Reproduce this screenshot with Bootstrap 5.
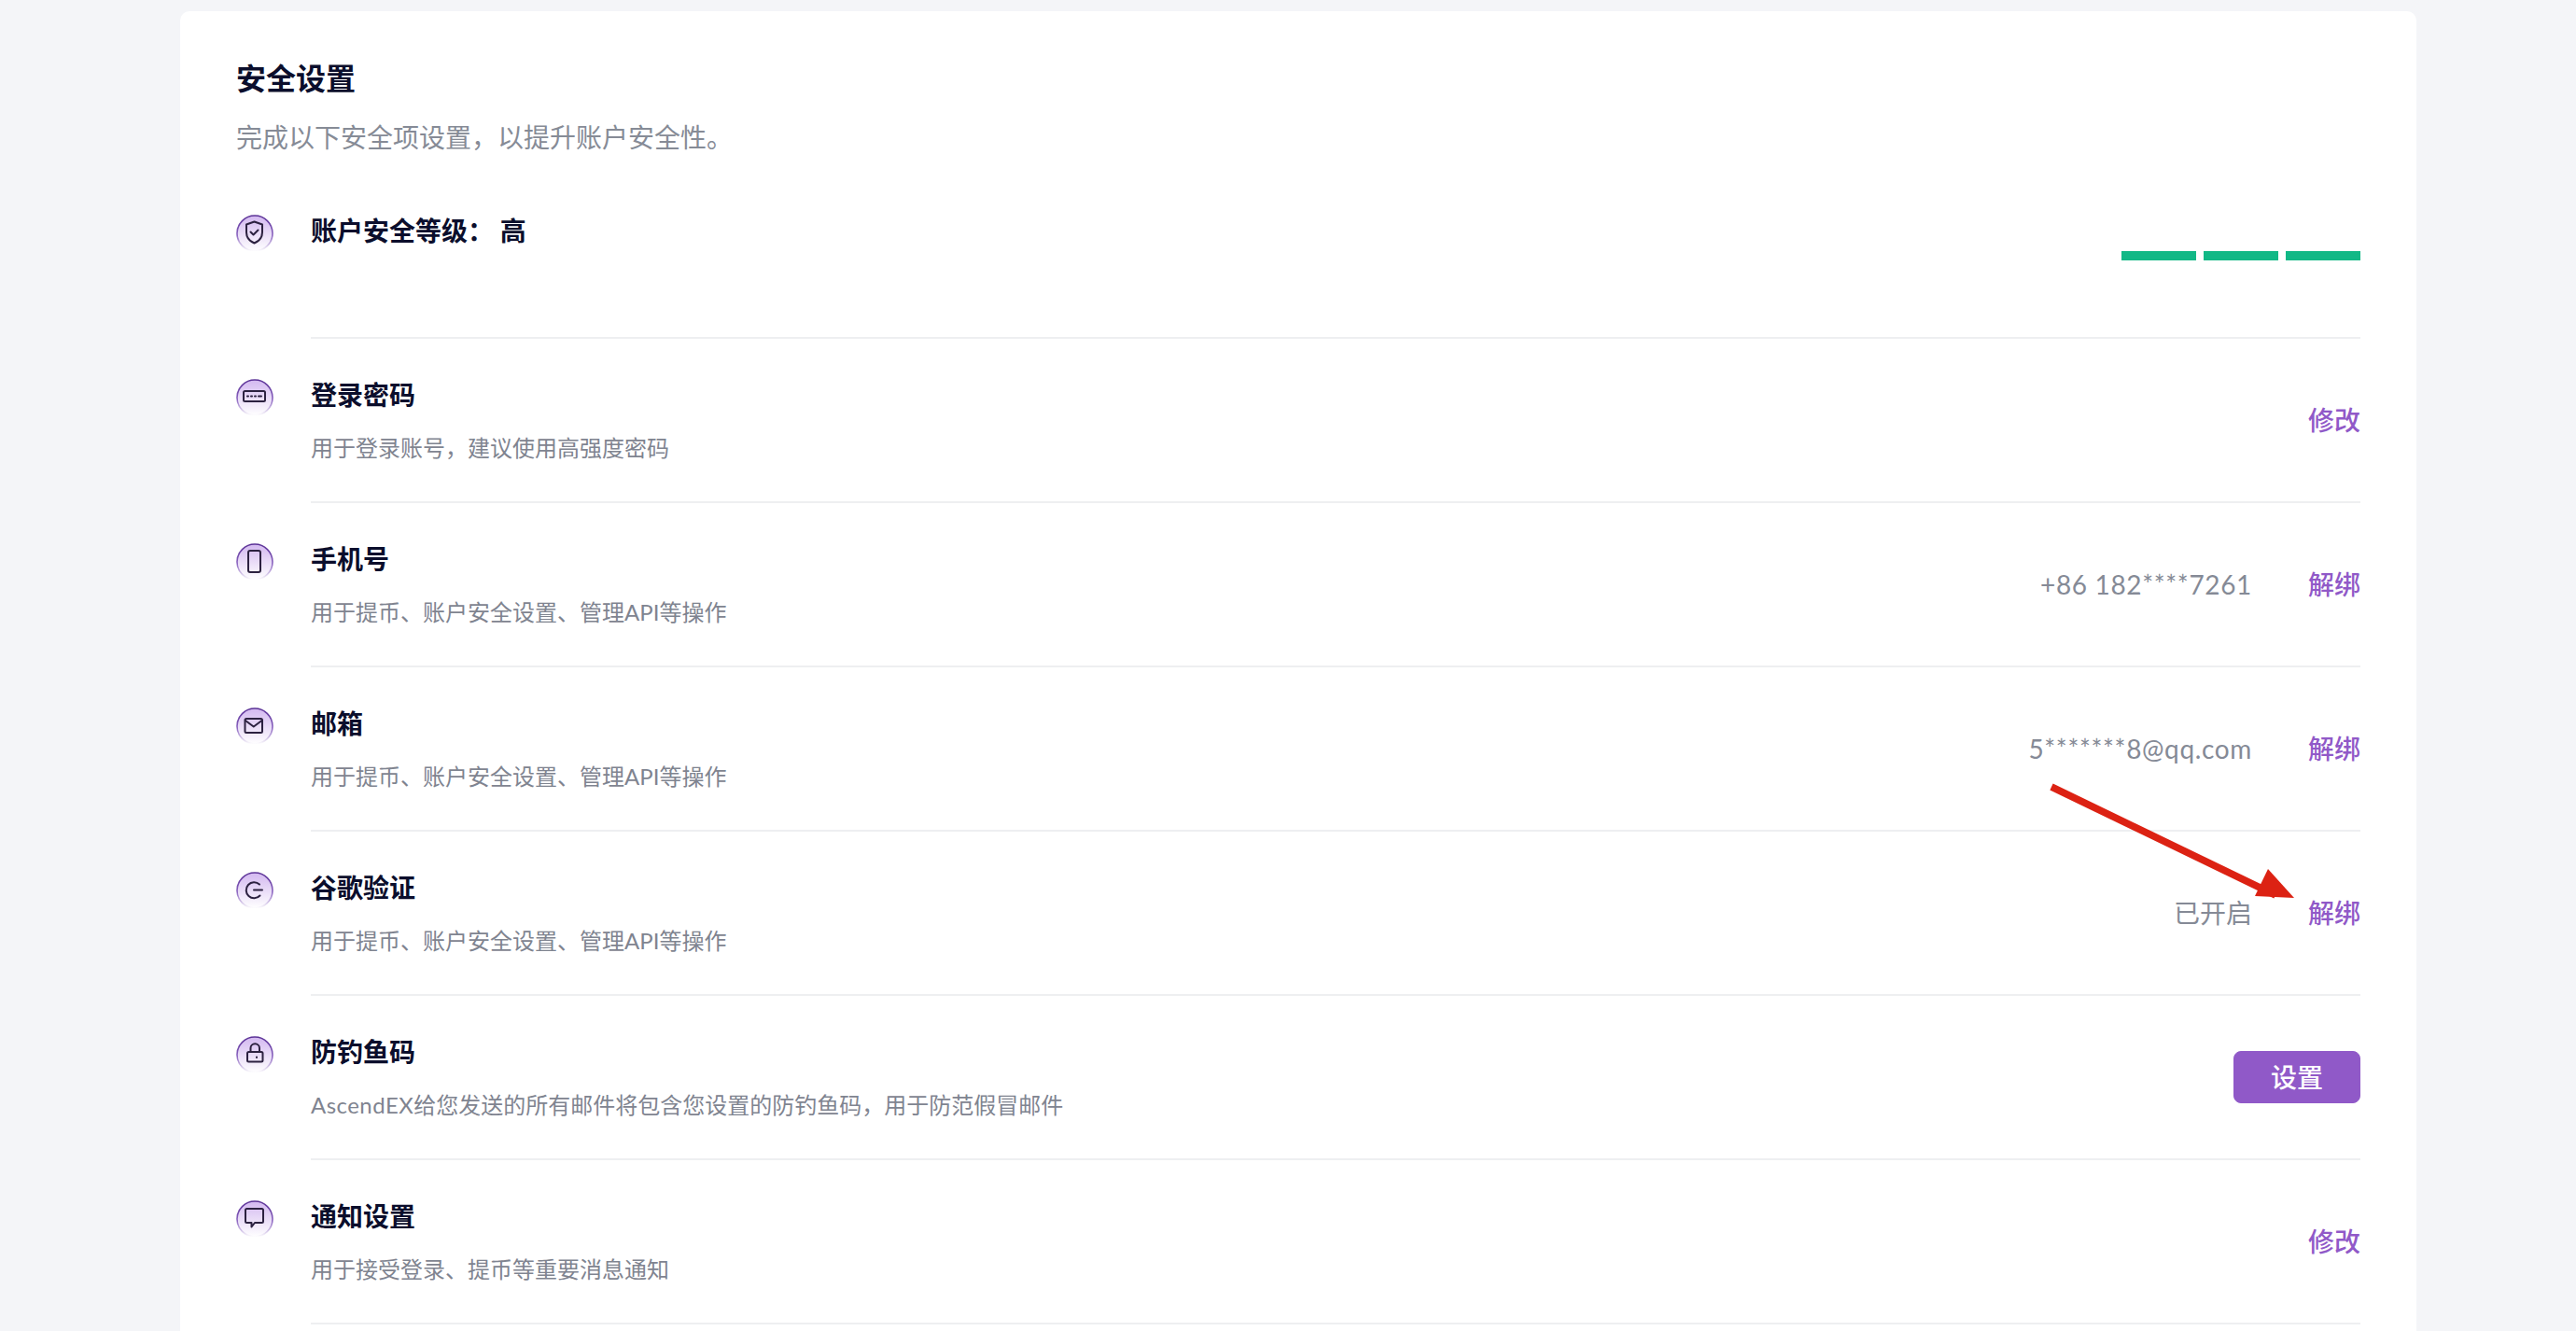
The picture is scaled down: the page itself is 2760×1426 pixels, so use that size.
<!DOCTYPE html>
<html lang="zh">
<head>
<meta charset="utf-8">
<title>安全设置</title>
<link href="https://cdn.jsdelivr.net/npm/bootstrap@5.3.0/dist/css/bootstrap.min.css" rel="stylesheet">
<style>
html,body{height:1426px;overflow:hidden}
body{background:#f4f5f8;font-family:"Lato","Noto Sans CJK SC",sans-serif;color:#0b0e2c}
.sec-page{padding:12px 171px 0 193px}
.sec-card{position:relative;height:1500px;background:#fff;border-radius:10px;padding:50px 60px 0}
.sec-title{font-size:32px;line-height:44px;font-weight:700;margin:0}
.sec-sub{font-size:28px;line-height:40px;color:#868b96;margin:21px 0 0}
.sec-rows{margin-top:20px}
.sec-row{height:176px}
.sec-ico{width:40px;height:40px;margin-top:43px;margin-right:40px;flex:none;display:block}
.sec-body{border-bottom:2px solid #eeeff1;height:176px}
.sec-text{padding-top:42px;align-self:flex-start}
.sec-name{font-size:28px;line-height:36px;font-weight:700;margin:0}
.sec-desc{font-size:24px;line-height:36px;color:#7f8490;margin:21px 0 0}
.sec-latin{letter-spacing:.45px}
.sec-value{font-size:28px;color:#858a96;margin-right:60px;letter-spacing:.65px}
.sec-value-cjk{letter-spacing:0}
.sec-link{font-size:28px;font-weight:500;color:#9059c8;text-decoration:none}
.sec-btn{width:136px;height:56px;padding:0;background:#9059c8;border-color:#9059c8;color:#fff;font-size:28px;font-weight:500;line-height:1;border-radius:8px}
.sec-bars{gap:8px}
.sec-bar{width:80px;height:10px;background:#12b886}
.sec-arrow{position:absolute;left:2000px;top:820px;width:280px;height:150px}
.ico-ring{fill:url(#icoFill);stroke:url(#icoStroke);stroke-width:1.6}
.ico-line{fill:none;stroke:#2c2140;stroke-width:2;stroke-linejoin:round;stroke-linecap:round}
.ico-defs{position:absolute;width:0;height:0}
</style>
</head>
<body>
<svg class="ico-defs" aria-hidden="true"><defs>
<linearGradient id="icoFill" x1="0" y1="0" x2="0" y2="1"><stop offset="0" stop-color="#d3b8f0"/><stop offset="1" stop-color="#fff"/></linearGradient>
<linearGradient id="icoStroke" x1="0" y1="0" x2="0" y2="1"><stop offset="0" stop-color="#5b3296"/><stop offset=".55" stop-color="#8a63c0"/><stop offset="1" stop-color="#fff"/></linearGradient>
</defs></svg>
<div class="sec-page">
<main class="sec-card">
  <h1 class="sec-title">安全设置</h1>
  <p class="sec-sub">完成以下安全项设置，以提升账户安全性。</p>
  <div class="sec-rows">
    <div class="sec-row d-flex">
      <svg class="sec-ico" viewBox="0 0 40 40"><circle class="ico-ring" cx="20" cy="20" r="19"/><path class="ico-line" d="M19.500 7.500l8.500 3v8.500c0 5.500-3.800 9.500-8.500 11.500C14.800 28.500 11 24.500 11 19v-8.500z"/><path class="ico-line" d="M15.500 18.500l3 3 5-5"/></svg>
      <div class="sec-body flex-grow-1 d-flex align-items-center justify-content-between">
        <div class="sec-text"><p class="sec-name">账户安全等级： 高</p></div>
        <div class="sec-bars d-flex"><div class="sec-bar"></div><div class="sec-bar"></div><div class="sec-bar"></div></div>
      </div>
    </div>
    <div class="sec-row d-flex">
      <svg class="sec-ico" viewBox="0 0 40 40"><circle class="ico-ring" cx="20" cy="20" r="19"/><rect class="ico-line" x="8" y="13" width="23" height="11" rx="1.500"/><path class="ico-line" d="M12 18.500h1M16 18.500h1M20 18.500h1M24 18.500h3"/></svg>
      <div class="sec-body flex-grow-1 d-flex align-items-center justify-content-between">
        <div class="sec-text"><p class="sec-name">登录密码</p><p class="sec-desc">用于登录账号，建议使用高强度密码</p></div>
        <a class="sec-link" href="#">修改</a>
      </div>
    </div>
    <div class="sec-row d-flex">
      <svg class="sec-ico" viewBox="0 0 40 40"><circle class="ico-ring" cx="20" cy="20" r="19"/><rect class="ico-line" x="13" y="8" width="13" height="23" rx="2"/></svg>
      <div class="sec-body flex-grow-1 d-flex align-items-center justify-content-between">
        <div class="sec-text"><p class="sec-name">手机号</p><p class="sec-desc">用于提币、账户安全设置、管理API等操作</p></div>
        <div class="d-flex align-items-center"><span class="sec-value">+86 182****7261</span><a class="sec-link" href="#">解绑</a></div>
      </div>
    </div>
    <div class="sec-row d-flex">
      <svg class="sec-ico" viewBox="0 0 40 40"><circle class="ico-ring" cx="20" cy="20" r="19"/><rect class="ico-line" x="9.500" y="12" width="18.500" height="15" rx="1.500"/><path class="ico-line" d="M10 14l8.750 6.500L27.500 14"/></svg>
      <div class="sec-body flex-grow-1 d-flex align-items-center justify-content-between">
        <div class="sec-text"><p class="sec-name">邮箱</p><p class="sec-desc">用于提币、账户安全设置、管理API等操作</p></div>
        <div class="d-flex align-items-center"><span class="sec-value">5*******8@qq.com</span><a class="sec-link" href="#">解绑</a></div>
      </div>
    </div>
    <div class="sec-row d-flex">
      <svg class="sec-ico" viewBox="0 0 40 40"><circle class="ico-ring" cx="20" cy="20" r="19"/><path class="ico-line" d="M25 13.500A8.500 8.500 0 1 0 25.500 25.500M19 19.500h9"/></svg>
      <div class="sec-body flex-grow-1 d-flex align-items-center justify-content-between">
        <div class="sec-text"><p class="sec-name">谷歌验证</p><p class="sec-desc">用于提币、账户安全设置、管理API等操作</p></div>
        <div class="d-flex align-items-center"><span class="sec-value sec-value-cjk">已开启</span><a class="sec-link" href="#">解绑</a></div>
      </div>
    </div>
    <div class="sec-row d-flex">
      <svg class="sec-ico" viewBox="0 0 40 40"><circle class="ico-ring" cx="20" cy="20" r="19"/><rect class="ico-line" x="12" y="17" width="16.500" height="10.500" rx="1.500"/><path class="ico-line" d="M15.500 17v-4a4.750 4.750 0 0 1 9.500 0v4M22 22.500v.5"/></svg>
      <div class="sec-body flex-grow-1 d-flex align-items-center justify-content-between">
        <div class="sec-text"><p class="sec-name">防钓鱼码</p><p class="sec-desc"><span class="sec-latin">AscendEX</span>给您发送的所有邮件将包含您设置的防钓鱼码，用于防范假冒邮件</p></div>
        <button type="button" class="btn sec-btn">设置</button>
      </div>
    </div>
    <div class="sec-row d-flex">
      <svg class="sec-ico" viewBox="0 0 40 40"><circle class="ico-ring" cx="20" cy="20" r="19"/><path class="ico-line" d="M11.500 9h16a1.500 1.500 0 0 1 1.500 1.500v12a1.500 1.500 0 0 1-1.500 1.500H20l-3.500 4.500V24h-5a1.500 1.500 0 0 1-1.500-1.500v-12A1.500 1.500 0 0 1 11.500 9z"/></svg>
      <div class="sec-body flex-grow-1 d-flex align-items-center justify-content-between">
        <div class="sec-text"><p class="sec-name">通知设置</p><p class="sec-desc">用于接受登录、提币等重要消息通知</p></div>
        <a class="sec-link" href="#">修改</a>
      </div>
    </div>
  </div>
  <svg class="sec-arrow" viewBox="0 0 280 150"><path d="M5 11L245 127" stroke="#dc2213" stroke-width="7.500" fill="none"/><polygon points="237,99 265,130 223,128" fill="#dc2213"/></svg>
</main>
</div>
</body>
</html>
